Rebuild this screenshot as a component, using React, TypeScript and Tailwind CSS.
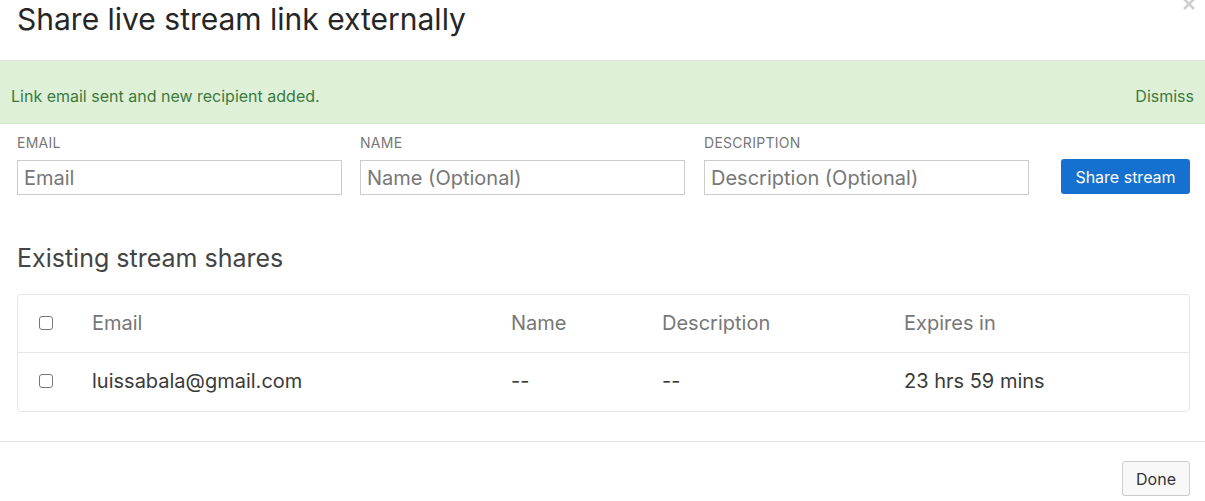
import React from "react";

export default function App() {
  const cols = "grid grid-cols-[74px_419px_151px_242px_1fr] items-center";
  return (
    <div className="w-[1205px] h-[501px] bg-white overflow-hidden relative" style={{ fontFamily: "Inter, 'Noto Sans', sans-serif" }}>
      <svg className="absolute left-[1182px] top-[-3px]" width="14" height="14" viewBox="0 0 14 14">
        <path d="M2 2 L12 12 M12 2 L2 12" stroke="#cfcfcf" strokeWidth="2.6" strokeLinecap="butt" />
      </svg>
      <div className="h-[61px] border-b border-[#e2e2e2] px-[17px]">
        <h1 className="text-[30px] leading-[38px] text-[#262626] font-normal">Share live stream link externally</h1>
      </div>
      <div className="h-[63px] bg-[#dff0d8] border-b border-[#d0e6c6] flex items-end justify-between pl-[11px] pr-[11px] pb-[15px] text-[16px] text-[#3c7a3c]">
        <span>Link email sent and new recipient added.</span>
        <span>Dismiss</span>
      </div>
      <div className="pl-[17px] pr-[15px] pt-[10px] flex items-end">
        <div className="flex flex-col w-[325px] shrink-0">
          <label className="text-[14px] tracking-[0.02em] text-[#777] leading-[18px] mb-[8px]">EMAIL</label>
          <input placeholder="Email" className="h-[35px] border border-[#ccc] px-[6px] text-[20px] placeholder-[#777] outline-none" />
        </div>
        <div className="flex flex-col w-[325px] ml-[18px] shrink-0">
          <label className="text-[14px] tracking-[0.02em] text-[#777] leading-[18px] mb-[8px]">NAME</label>
          <input placeholder="Name (Optional)" className="h-[35px] border border-[#ccc] px-[6px] text-[20px] placeholder-[#777] outline-none" />
        </div>
        <div className="flex flex-col w-[325px] ml-[19px] shrink-0">
          <label className="text-[14px] tracking-[0.02em] text-[#777] leading-[18px] mb-[8px]">DESCRIPTION</label>
          <input placeholder="Description (Optional)" className="h-[35px] border border-[#ccc] px-[6px] text-[20px] placeholder-[#777] outline-none" />
        </div>
        <button className="ml-[32px] mb-[1px] h-[35px] w-[129px] shrink-0 bg-[#1570cf] text-white text-[16px] rounded-[3px]">Share stream</button>
      </div>
      <h2 className="px-[17px] mt-[47px] text-[25px] leading-[32px] text-[#444]">Existing stream shares</h2>
      <div className="mx-[17px] mt-[20px] w-[1173px] border border-[#e6e6e6] rounded-[4px] text-[20px]">
        <div className={cols + " h-[58px] pb-[2px] border-b border-[#e6e6e6] text-[#777]"}>
          <div className="pl-[21px] flex"><span className="w-[14px] h-[14px] border border-[#777] rounded-[3px]" /></div>
          <div>Email</div>
          <div>Name</div>
          <div>Description</div>
          <div>Expires in</div>
        </div>
        <div className={cols + " h-[58px] pb-[2px] text-[#3a3a3a]"}>
          <div className="pl-[21px] flex"><span className="w-[14px] h-[14px] border border-[#777] rounded-[3px]" /></div>
          <div>luissabala@gmail.com</div>
          <div>--</div>
          <div>--</div>
          <div>23 hrs 59 mins</div>
        </div>
      </div>
      <div className="mt-[29px] border-t border-[#e2e2e2] flex justify-end px-[15px] pt-[19px]">
        <button className="h-[35px] w-[68px] bg-[#f8f8f8] border border-[#ccc] rounded-[3px] text-[16px] text-[#333]">Done</button>
      </div>
    </div>
  );
}
